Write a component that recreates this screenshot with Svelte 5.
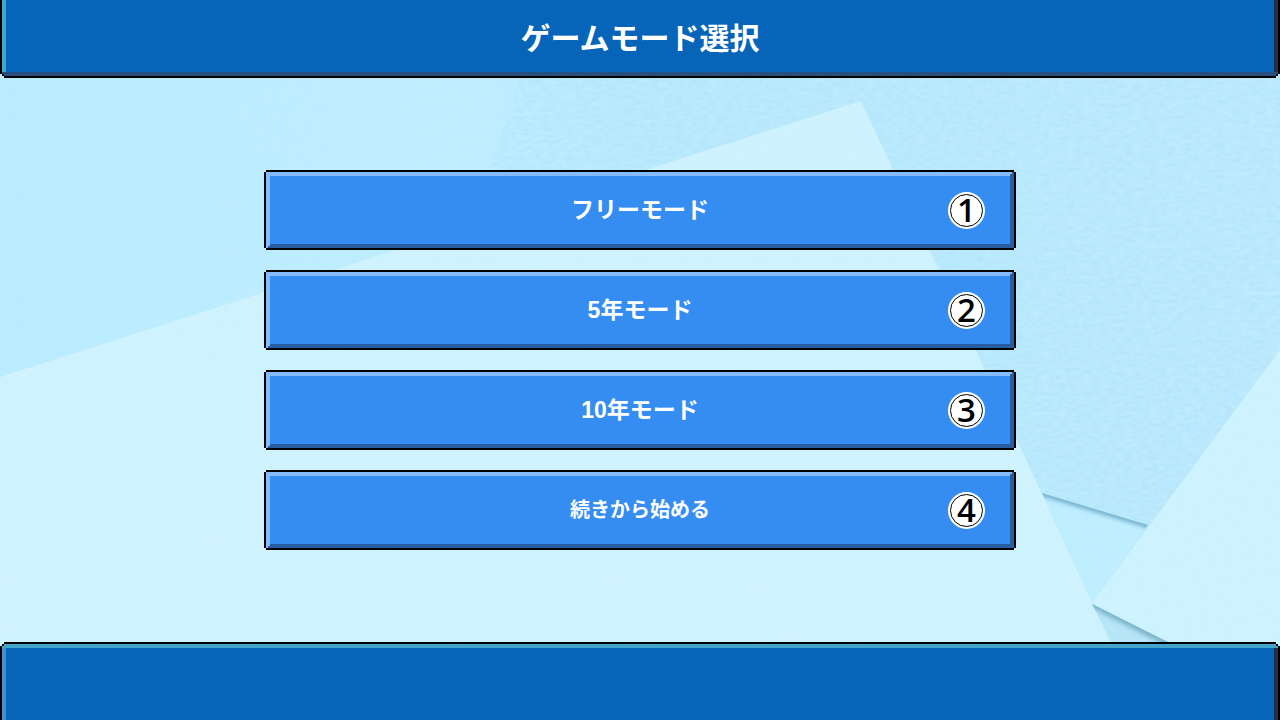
<script>
  let selected = $state('')

  const modes = [
    { id: 'free', label: 'フリーモード', key: '1' },
    { id: 'year5', label: '5年モード', key: '2' },
    { id: 'year10', label: '10年モード', key: '3' },
    { id: 'continue', label: '続きから始める', key: '4', small: true }
  ]

  function onKeydown(e) {
    const mode = modes.find(m => m.key === e.key)
    if (mode) selected = mode.id
  }
</script>

<svelte:window onkeydown={onKeydown} />

<div class="screen">
  <svg class="paper" viewBox="0 0 1280 720" preserveAspectRatio="xMidYMid slice" aria-hidden="true">
    <defs>
      <linearGradient id="base" x1="0" y1="0" x2="1" y2="0">
        <stop offset="0" stop-color="#bbecff" />
        <stop offset="0.35" stop-color="#bfeeff" />
        <stop offset="0.5" stop-color="#bcebfd" />
        <stop offset="1" stop-color="#beebfe" />
      </linearGradient>
      <linearGradient id="sheet" x1="0" y1="0" x2="0" y2="1">
        <stop offset="0" stop-color="#cff2fe" />
        <stop offset="1" stop-color="#d1f4ff" />
      </linearGradient>
      <filter id="grain" x="0" y="0" width="100%" height="100%" color-interpolation-filters="sRGB">
        <feTurbulence type="fractalNoise" baseFrequency="0.12 0.25" numOctaves="5" seed="4" />
        <feColorMatrix values="0 0 0 0 0.62  0 0 0 0 0.85  0 0 0 0 0.96  1.6 0 0 0 -0.5" />
      </filter>
      <filter id="soft"><feGaussianBlur stdDeviation="2" /></filter>
      <clipPath id="backSheet"><path d="M540 0H1280V565L1030 489 861 101 470 226 490 170 520 78Z" /></clipPath>
      <clipPath id="gap"><path d="M1042 493 1148 525 1092 602Z" /></clipPath>
      <clipPath id="corner"><path d="M1092 604 1170 643 1112 643Z" /></clipPath>
    </defs>
    <rect width="1280" height="720" fill="url(#base)" />
    <g clip-path="url(#backSheet)">
      <rect width="1280" height="720" filter="url(#grain)" opacity="0.3" />
    </g>
    <g clip-path="url(#gap)">
      <path d="M1030 480H1160V610H1030Z" fill="#bfeeff" />
      <path d="M1036 491 1154 527" stroke="#6fadc9" stroke-width="6" filter="url(#soft)" />
    </g>
    <path d="M0 377 861 101 1110 642 1147 720H0Z" fill="url(#sheet)" />
    <path d="M1280 350 1092 603 1320 720H1280Z" fill="#cff3ff" />
    <g clip-path="url(#corner)">
      <path d="M1080 590H1180V650H1080Z" fill="#b7e6f6" />
      <path d="M1086 600 1176 646" stroke="#7bb5ca" stroke-width="9" filter="url(#soft)" />
    </g>
    <rect width="1280" height="720" filter="url(#grain)" opacity="0.06" />
  </svg>

  <header class="bar top">
    <div class="face"><h1>ゲームモード選択</h1></div>
  </header>

  <main>
    {#each modes as mode (mode.id)}
      <button
        class="mode"
        class:small={mode.small}
        aria-pressed={selected === mode.id}
        onclick={() => (selected = mode.id)}
      >
        <span>{mode.label}</span>
        <span class="mark"><span class="ring">{mode.key}</span></span>
      </button>
    {/each}
  </main>

  <footer class="bar bottom">
    <div class="face"></div>
  </footer>
</div>

<style>
  :global(body) {
    margin: 0;
  }

  .screen {
    position: relative;
    display: flex;
    flex-direction: column;
    min-height: 100vh;
    font-family: "Liberation Sans", "Noto Sans CJK JP", sans-serif;
    color: #fff;
  }

  .paper {
    position: absolute;
    inset: 0;
    width: 100%;
    height: 100%;
  }

  .bar {
    position: relative;
    box-sizing: border-box;
    height: 78px;
    background: #000;
  }

  .top {
    padding: 0 2px 2px;
    clip-path: polygon(0 0, 100% 0, 100% 74px, calc(100% - 2px) 74px, calc(100% - 2px) 76px, calc(100% - 4px) 76px, calc(100% - 4px) 100%, 4px 100%, 4px 76px, 2px 76px, 2px 74px, 0 74px);
  }

  .bottom {
    padding: 2px 2px 0;
    clip-path: polygon(4px 0, calc(100% - 4px) 0, calc(100% - 4px) 2px, calc(100% - 2px) 2px, calc(100% - 2px) 4px, 100% 4px, 100% 100%, 0 100%, 0 4px, 2px 4px, 2px 2px, 4px 2px);
  }

  .face {
    display: flex;
    align-items: center;
    justify-content: center;
    height: 76px;
    background: #0665b8;
  }

  .top .face {
    box-shadow: inset 0 -4px #274f80, inset 4px 0 #43a5ca, inset -4px 0 #262c49;
    clip-path: polygon(0 0, 100% 0, 100% 74px, calc(100% - 2px) 74px, calc(100% - 2px) 100%, 2px 100%, 2px 74px, 0 74px);
  }

  .bottom .face {
    box-shadow: inset 0 4px #43a5ca, inset 4px 0 #448fd2, inset -4px 0 #262c49;
    clip-path: polygon(2px 0, calc(100% - 2px) 0, calc(100% - 2px) 2px, 100% 2px, 100% 100%, 0 100%, 0 2px, 2px 2px);
  }

  h1 {
    margin: 0;
    padding-top: 2px;
    font-size: 30px;
    line-height: 36px;
    font-weight: 700;
  }

  main {
    position: relative;
    flex: 1;
    display: flex;
    flex-direction: column;
    align-items: center;
    justify-content: center;
    gap: 24px;
    padding: 24px;
  }

  .mode {
    position: relative;
    width: 100%;
    max-width: 748px;
    height: 76px;
    padding: 0 80px;
    border: 0;
    background: #358df2;
    box-shadow:
      -2px 0 #000, 2px 0 #000, 0 -2px #000, 0 2px #000,
      inset 2px 0 #84bcff, inset -2px 0 #265e9f,
      inset 0 2px #84bcff, inset 0 -2px #265e9f,
      inset 4px 0 #84bcff, inset -4px 0 #265e9f,
      inset 0 4px #84bcff, inset 0 -4px #265e9f;
    color: inherit;
    font: inherit;
    font-size: 23px;
    font-weight: 700;
    line-height: 32px;
    cursor: pointer;
  }

  .mode:hover {
    background: #4b9bf6;
  }

  .small {
    font-size: 20px;
  }

  /* shortcut number on a white disc */
  .mark {
    position: absolute;
    top: 20px;
    right: 29px;
    box-sizing: border-box;
    width: 37px;
    height: 37px;
    padding: 2px;
    border-radius: 50%;
    background: #fff;
  }

  .ring {
    display: block;
    box-sizing: border-box;
    height: 33px;
    border: 1px solid #000;
    border-radius: 50%;
    color: #000;
    font-family: "Open Sans", "Noto Sans", sans-serif;
    font-size: 33px;
    font-weight: 600;
    line-height: 29px;
  }
</style>
